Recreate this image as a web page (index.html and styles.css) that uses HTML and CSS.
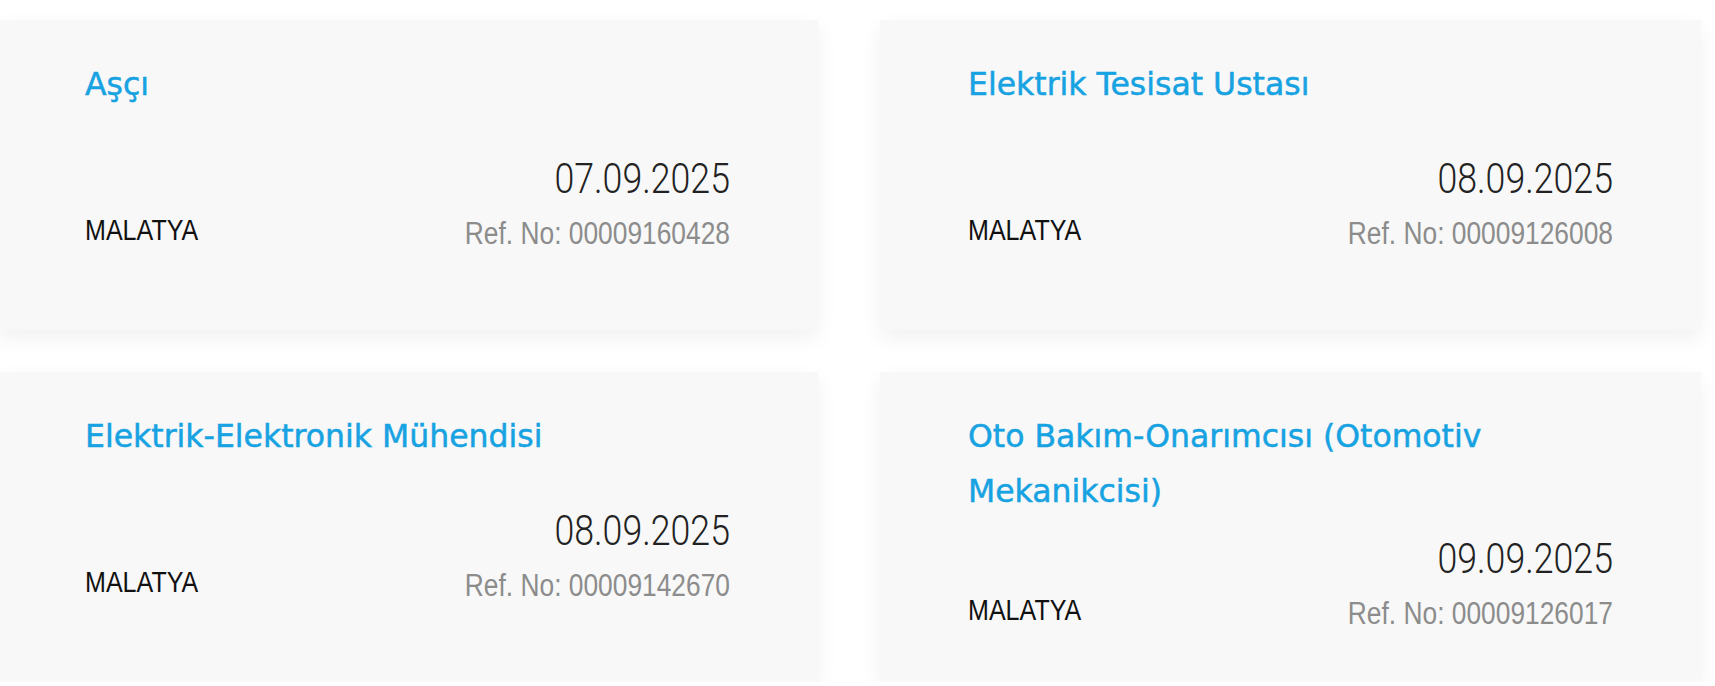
FILE: index.html
```html
<!DOCTYPE html>
<html lang="tr">
<head>
  <meta charset="UTF-8">
  <title>İş İlanları</title>
  <link rel="stylesheet" href="styles.css">
</head>
<body>
  <div class="ilan-list">
    <div class="ilan-card">
      <h3 class="ilan-title">Aşçı</h3>
      <div class="ilan-meta">
        <span class="ilan-city">MALATYA</span>
        <div class="ilan-right">
          <div class="ilan-date">07.09.2025</div>
          <div class="ilan-ref">Ref. No: 00009160428</div>
        </div>
      </div>
    </div>

    <div class="ilan-card">
      <h3 class="ilan-title">Elektrik Tesisat Ustası</h3>
      <div class="ilan-meta">
        <span class="ilan-city">MALATYA</span>
        <div class="ilan-right">
          <div class="ilan-date">08.09.2025</div>
          <div class="ilan-ref">Ref. No: 00009126008</div>
        </div>
      </div>
    </div>

    <div class="ilan-card">
      <h3 class="ilan-title">Elektrik-Elektronik Mühendisi</h3>
      <div class="ilan-meta">
        <span class="ilan-city">MALATYA</span>
        <div class="ilan-right">
          <div class="ilan-date">08.09.2025</div>
          <div class="ilan-ref">Ref. No: 00009142670</div>
        </div>
      </div>
    </div>

    <div class="ilan-card">
      <h3 class="ilan-title">Oto Bakım-Onarımcısı (Otomotiv Mekanikcisi)</h3>
      <div class="ilan-meta">
        <span class="ilan-city">MALATYA</span>
        <div class="ilan-right">
          <div class="ilan-date">09.09.2025</div>
          <div class="ilan-ref">Ref. No: 00009126017</div>
        </div>
      </div>
    </div>
  </div>
</body>
</html>
```

FILE: styles.css
```css
body {
  margin: 0;
  background: #ffffff;
  overflow: hidden;
  font-family: "Liberation Sans", Arial, sans-serif;
}

.ilan-list {
  display: grid;
  grid-template-columns: 821px 821px;
  column-gap: 62px;
  row-gap: 42px;
  padding-top: 20px;
  margin-left: -3px;
}

.ilan-card {
  background: #f8f8f8;
  box-shadow: 0 8px 20px rgba(0, 0, 0, 0.06);
  padding: 37px 88px 0 88px;
  min-height: 310px;
  box-sizing: border-box;
}

.ilan-title {
  margin: 0;
  font-family: "DejaVu Sans", sans-serif;
  font-weight: normal;
  font-size: 31.5px;
  line-height: 55px;
  min-height: 82px;
  color: #17a2e2;
  -webkit-text-stroke: 0.5px #17a2e2;
}

.ilan-meta {
  display: flex;
  justify-content: space-between;
  align-items: flex-end;
  margin-top: 17px;
}

/* the original font is a narrow one, so squeeze these a bit */
.ilan-city {
  font-size: 29.5px;
  line-height: 34px;
  color: #111;
  margin-bottom: 5px;
  transform: scaleX(0.85);
  transform-origin: left;
}

.ilan-right {
  text-align: right;
}

.ilan-date {
  font-family: Roboto, sans-serif;
  font-weight: 300;
  font-size: 42px;
  line-height: 46px;
  color: #222;
  transform: scaleX(0.85);
  transform-origin: right;
}

.ilan-ref {
  font-size: 31px;
  line-height: 36px;
  margin-top: 14px;
  color: #8c8c8c;
  transform: scaleX(0.85);
  transform-origin: right;
}
```
